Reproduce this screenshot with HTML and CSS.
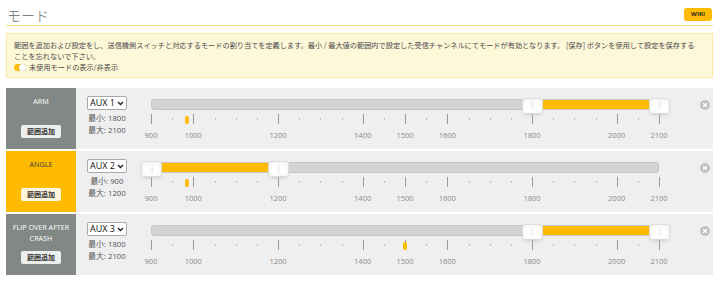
FILE: index.html
```html
<!DOCTYPE html>
<html>
<head>
    <meta charset="utf-8">
    <link rel="stylesheet" href="styles.css">
</head>
<body>
    <div class="header">
        <h2 class="title">モード</h2>
        <a class="wiki" href="#">WIKI</a>
    </div>
    <div class="note">
        <p>範囲を追加および設定をし、送信機側スイッチと対応するモードの割り当てを定義します。最小 / 最大値の範囲内で設定した受信チャンネルにてモードが有効となります。 [保存] ボタンを使用して設定を保存する<br>ことを忘れないで下さい。</p>
        <label class="toggle-row"><span class="toggle"><span class="knob"></span></span> 未使用モードの表示/非表示</label>
    </div>

    <div class="modes">
        <div class="mode">
            <div class="info">
                <div class="name">ARM</div>
                <button class="add-range">範囲追加</button>
            </div>
            <div class="range">
                <div class="channel">
                    <span class="select"><span>AUX 1</span><svg width="7" height="5" viewBox="0 0 7 5"><path d="M1 1l2.5 2.5L6 1" fill="none" stroke="#222" stroke-width="1.4"/></svg></span>
                    <div class="limits">最小: 1800<br>最大: 2100</div>
                </div>
                <div class="slider" data-from="1800" data-to="2100" data-value="985"></div>
                <span class="remove"><svg width="10" height="10" viewBox="0 0 10 10"><circle cx="5" cy="5" r="5" fill="#c2c2c2"/><path d="M3.2 3.2l3.6 3.6M6.8 3.2l-3.6 3.6" stroke="#fff" stroke-width="1.3"/></svg></span>
            </div>
        </div>

        <div class="mode on">
            <div class="info">
                <div class="name">ANGLE</div>
                <button class="add-range">範囲追加</button>
            </div>
            <div class="range">
                <div class="channel">
                    <span class="select"><span>AUX 2</span><svg width="7" height="5" viewBox="0 0 7 5"><path d="M1 1l2.5 2.5L6 1" fill="none" stroke="#222" stroke-width="1.4"/></svg></span>
                    <div class="limits">最小: 900<br>最大: 1200</div>
                </div>
                <div class="slider" data-from="900" data-to="1200" data-value="985"></div>
                <span class="remove"><svg width="10" height="10" viewBox="0 0 10 10"><circle cx="5" cy="5" r="5" fill="#c2c2c2"/><path d="M3.2 3.2l3.6 3.6M6.8 3.2l-3.6 3.6" stroke="#fff" stroke-width="1.3"/></svg></span>
            </div>
        </div>

        <div class="mode">
            <div class="info">
                <div class="name">FLIP OVER AFTER<br>CRASH</div>
                <button class="add-range">範囲追加</button>
            </div>
            <div class="range">
                <div class="channel">
                    <span class="select"><span>AUX 3</span><svg width="7" height="5" viewBox="0 0 7 5"><path d="M1 1l2.5 2.5L6 1" fill="none" stroke="#222" stroke-width="1.4"/></svg></span>
                    <div class="limits">最小: 1800<br>最大: 2100</div>
                </div>
                <div class="slider" data-from="1800" data-to="2100" data-value="1500"></div>
                <span class="remove"><svg width="10" height="10" viewBox="0 0 10 10"><circle cx="5" cy="5" r="5" fill="#c2c2c2"/><path d="M3.2 3.2l3.6 3.6M6.8 3.2l-3.6 3.6" stroke="#fff" stroke-width="1.3"/></svg></span>
            </div>
        </div>
    </div>

    <script>
        var MIN = 900;
        var MAX = 2100;
        var labelled = [900, 1000, 1200, 1400, 1500, 1600, 1800, 2000, 2100];

        function pct(v) {
            return ((v - MIN) / (MAX - MIN) * 100) + '%';
        }

        function el(cls, left) {
            var d = document.createElement('div');
            d.className = cls;
            if (left !== undefined) d.style.left = left;
            return d;
        }

        function buildSlider(slider) {
            var from = parseInt(slider.dataset.from);
            var to = parseInt(slider.dataset.to);
            var value = parseInt(slider.dataset.value);

            var track = el('track');
            var connect = el('connect', pct(from));
            connect.style.right = (100 - parseFloat(pct(to))) + '%';
            track.appendChild(connect);
            slider.appendChild(track);

            // pips every 50, labels on a few
            for (var v = MIN; v <= MAX; v += 50) {
                if (labelled.indexOf(v) >= 0) {
                    slider.appendChild(el('pip major', pct(v)));
                    var lbl = el('pip-label', pct(v));
                    lbl.innerText = v;
                    slider.appendChild(lbl);
                } else {
                    slider.appendChild(el('pip minor', pct(v)));
                }
            }

            slider.appendChild(el('marker', pct(value)));
            slider.appendChild(el('handle', pct(from)));
            slider.appendChild(el('handle', pct(to)));
        }

        var sliders = document.querySelectorAll('.slider');
        for (var i = 0; i < sliders.length; i++) {
            buildSlider(sliders[i]);
        }
    </script>
</body>
</html>
```

FILE: styles.css
```css
body {
    margin: 0;
    padding: 4px 7px 0 6px;
    background-color: #fff;
    font-family: "Open Sans", "Noto Sans CJK JP", sans-serif;
    color: #444;
}
.header {
    display: flex;
    justify-content: space-between;
    align-items: center;
    height: 21px;
    border-bottom: 1px solid #f8dc84;
}
.title {
    margin: 0 0 0 1px;
    font-family: "Noto Sans CJK JP", sans-serif;
    font-size: 14px;
    font-weight: 300;
    line-height: 20px;
    color: #666;
}
.wiki {
    display: block;
    width: 28px;
    height: 13px;
    line-height: 13px;
    margin-right: 1px;
    text-align: center;
    background-color: #ffbb00;
    border-radius: 3px;
    color: #2a2a2a;
    font-size: 6px;
    font-weight: 700;
    text-decoration: none;
}
/* yellow help box */
.note {
    margin-top: 7px;
    padding: 6px 7px 4px;
    background-color: #fff8d8;
    border: 1px solid #fde8a6;
    font-family: "Noto Sans CJK JP", sans-serif;
    font-size: 7.2px;
    line-height: 11px;
    color: #4a4a4a;
}
.note p {
    margin: 0;
}
.toggle-row {
    display: flex;
    align-items: center;
    gap: 3px;
}
.toggle {
    position: relative;
    display: inline-block;
    width: 12px;
    height: 7px;
    border-radius: 4px;
    background-color: #ffbb00;
}
.toggle .knob {
    position: absolute;
    right: 0;
    top: 0;
    width: 7px;
    height: 7px;
    border-radius: 50%;
    background-color: #fff;
    box-shadow: 0 0 1px #999;
}
.modes {
    margin-top: 10px;
}
.mode {
    display: flex;
    height: 61px;
    margin-bottom: 2px;
}
.info {
    display: flex;
    flex-direction: column;
    align-items: center;
    width: 70px;
    padding: 8px 0 11px;
    box-sizing: border-box;
    background-color: #828885;
    color: #fff;
    text-align: center;
}
.mode.on .info {
    background-color: #ffbb00;
    color: #3b3b3b;
}
.name {
    font-size: 7.2px;
    line-height: 11px;
    white-space: nowrap;
}
.add-range {
    margin-top: auto;
    height: 13px;
    padding: 0 6px;
    border: none;
    border-radius: 2px;
    background-color: rgba(255, 255, 255, 0.86);
    font-family: "Noto Sans CJK JP", sans-serif;
    font-size: 7px;
    font-weight: 700;
    line-height: 13px;
    color: #333;
}
.range {
    display: flex;
    flex: 1;
    background-color: #efefef;
}
.channel {
    display: flex;
    flex-direction: column;
    align-items: center;
    width: 50px;
    padding: 8px 0 0 6px;
    margin-right: 19px;
}
.select {
    display: flex;
    justify-content: space-between;
    align-items: center;
    width: 40px;
    height: 14px;
    box-sizing: border-box;
    padding: 0 2px 0 2px;
    background-color: #fff;
    border: 1px solid #a9a9a9;
    border-radius: 2px;
    font-size: 9px;
    line-height: 12px;
    color: #111;
    white-space: nowrap;
}
.select svg {
    flex-shrink: 0;
}
.limits {
    margin-top: 2px;
    font-size: 7.8px;
    line-height: 12px;
    color: #555;
    text-align: center;
    white-space: nowrap;
}
/* slider */
.slider {
    position: relative;
    width: 508px;
}
.track {
    position: absolute;
    left: 0;
    right: 0;
    top: 11px;
    height: 11px;
    box-sizing: border-box;
    background-color: #d3d3d3;
    border: 1px solid #c6c6c6;
    border-radius: 3px;
}
.connect {
    position: absolute;
    top: 0;
    bottom: 0;
    background-color: #ffbb00;
}
.handle {
    position: absolute;
    top: 10px;
    width: 21px;
    height: 16px;
    margin-left: -10.5px;
    box-sizing: border-box;
    background-color: #fff;
    border: 1px solid #dcdcdc;
    border-radius: 3px;
    box-shadow: inset 0 1px 5px #f0f0f0, 0 2px 4px -2px #bbb;
}
.handle::before, .handle::after {
    content: "";
    position: absolute;
    top: 3px;
    width: 1px;
    height: 8px;
    background-color: #ececec;
}
.handle::before {
    left: 8px;
}
.handle::after {
    left: 10px;
}
.pip {
    position: absolute;
    width: 1px;
    background-color: #9a9a9a;
}
.pip.major {
    top: 26px;
    height: 10px;
}
.pip.minor {
    top: 30px;
    height: 2px;
    background-color: #bdbdbd;
}
.pip-label {
    position: absolute;
    top: 42px;
    transform: translateX(-50%);
    font-size: 7.5px;
    line-height: 10px;
    color: #8a8a8a;
}
.marker {
    position: absolute;
    top: 28px;
    width: 4px;
    height: 8px;
    margin-left: -2px;
    border-radius: 2px;
    background-color: #ffbb00;
}
.remove {
    margin: 5px 3px 0 auto;
    height: 10px;
}
```
